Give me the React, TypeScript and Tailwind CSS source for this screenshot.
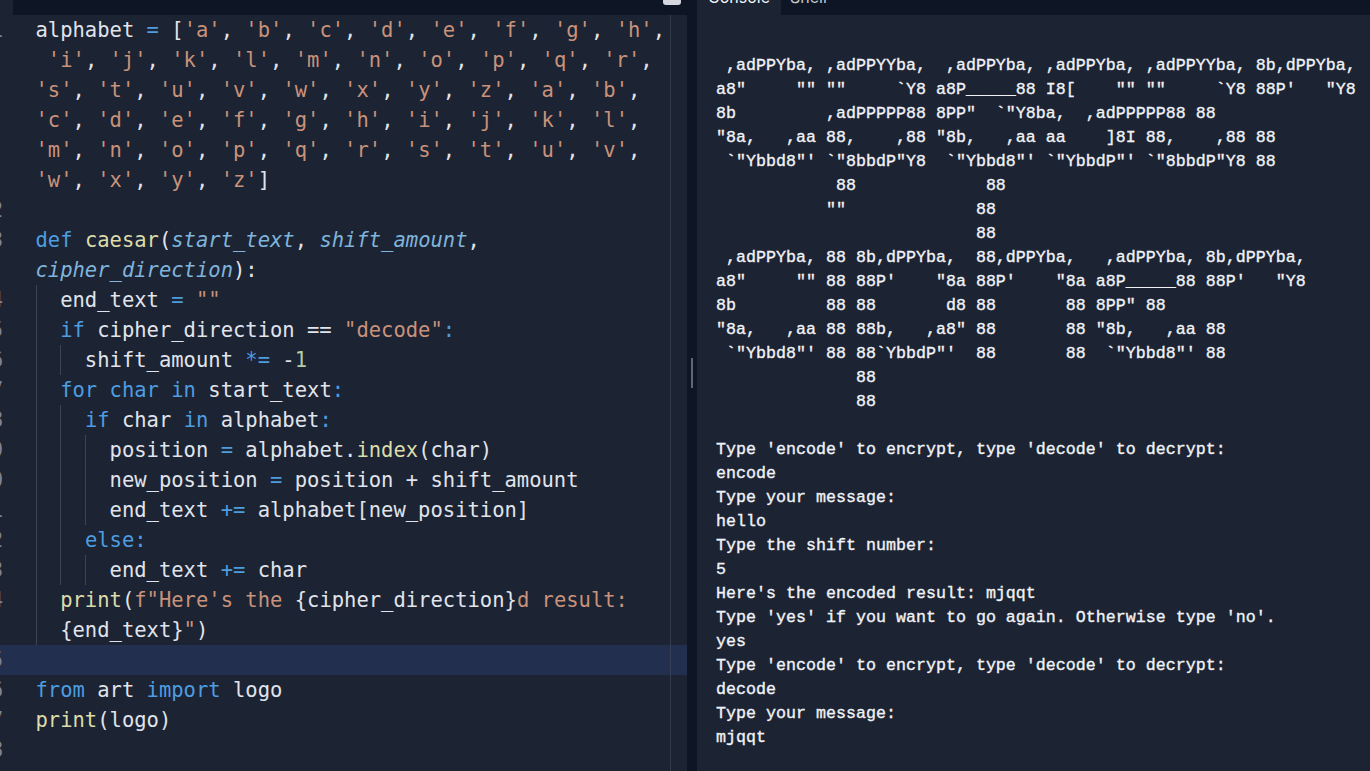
type Part = [string, string]
type Line = { n?: string; parts: Part[]; guides?: number[]; active?: boolean }

const W = 'text-[#e0e4ec]'
const B = 'text-[#4d9de0]'
const S = 'text-[#c9927a]'
const Y = 'text-[#dcdcaa]'
const N = 'text-[#b5cea8]'
const P = 'text-[#7fb4dc] italic'

function color(c: string) {
  if (c === 'b') return B
  if (c === 's') return S
  if (c === 'y') return Y
  if (c === 'n') return N
  if (c === 'p') return P
  return W
}

const lines: Line[] = [
  { n: '1', parts: [['alphabet ', 'w'], ['=', 'b'], [' [', 'w'], ["'a'", 's'], [', ', 'w'], ["'b'", 's'], [', ', 'w'], ["'c'", 's'], [', ', 'w'], ["'d'", 's'], [', ', 'w'], ["'e'", 's'], [', ', 'w'], ["'f'", 's'], [', ', 'w'], ["'g'", 's'], [', ', 'w'], ["'h'", 's'], [',', 'w']] },
  { parts: [[' ', 'w'], ["'i'", 's'], [', ', 'w'], ["'j'", 's'], [', ', 'w'], ["'k'", 's'], [', ', 'w'], ["'l'", 's'], [', ', 'w'], ["'m'", 's'], [', ', 'w'], ["'n'", 's'], [', ', 'w'], ["'o'", 's'], [', ', 'w'], ["'p'", 's'], [', ', 'w'], ["'q'", 's'], [', ', 'w'], ["'r'", 's'], [',', 'w']] },
  { parts: [["'s'", 's'], [', ', 'w'], ["'t'", 's'], [', ', 'w'], ["'u'", 's'], [', ', 'w'], ["'v'", 's'], [', ', 'w'], ["'w'", 's'], [', ', 'w'], ["'x'", 's'], [', ', 'w'], ["'y'", 's'], [', ', 'w'], ["'z'", 's'], [', ', 'w'], ["'a'", 's'], [', ', 'w'], ["'b'", 's'], [',', 'w']] },
  { parts: [["'c'", 's'], [', ', 'w'], ["'d'", 's'], [', ', 'w'], ["'e'", 's'], [', ', 'w'], ["'f'", 's'], [', ', 'w'], ["'g'", 's'], [', ', 'w'], ["'h'", 's'], [', ', 'w'], ["'i'", 's'], [', ', 'w'], ["'j'", 's'], [', ', 'w'], ["'k'", 's'], [', ', 'w'], ["'l'", 's'], [',', 'w']] },
  { parts: [["'m'", 's'], [', ', 'w'], ["'n'", 's'], [', ', 'w'], ["'o'", 's'], [', ', 'w'], ["'p'", 's'], [', ', 'w'], ["'q'", 's'], [', ', 'w'], ["'r'", 's'], [', ', 'w'], ["'s'", 's'], [', ', 'w'], ["'t'", 's'], [', ', 'w'], ["'u'", 's'], [', ', 'w'], ["'v'", 's'], [',', 'w']] },
  { parts: [["'w'", 's'], [', ', 'w'], ["'x'", 's'], [', ', 'w'], ["'y'", 's'], [', ', 'w'], ["'z'", 's'], [']', 'w']] },
  { n: '2', parts: [] },
  { n: '3', parts: [['def', 'b'], [' ', 'w'], ['caesar', 'y'], ['(', 'w'], ['start_text', 'p'], [', ', 'w'], ['shift_amount', 'p'], [',', 'w']] },
  { parts: [['cipher_direction', 'p'], ['):', 'w']] },
  { n: '4', guides: [0], parts: [['  end_text ', 'w'], ['=', 'b'], [' ', 'w'], ['""', 's']] },
  { n: '5', guides: [0], parts: [['  ', 'w'], ['if', 'b'], [' cipher_direction == ', 'w'], ['"decode"', 's'], [':', 'b']] },
  { n: '6', guides: [0, 1], parts: [['    shift_amount ', 'w'], ['*=', 'b'], [' -', 'w'], ['1', 'n']] },
  { n: '7', guides: [0], parts: [['  ', 'w'], ['for', 'b'], [' ', 'w'], ['char', 'b'], [' ', 'w'], ['in', 'b'], [' start_text', 'w'], [':', 'b']] },
  { n: '8', guides: [0, 1], parts: [['    ', 'w'], ['if', 'b'], [' char ', 'w'], ['in', 'b'], [' alphabet', 'w'], [':', 'b']] },
  { n: '9', guides: [0, 1, 2], parts: [['      position ', 'w'], ['=', 'b'], [' alphabet.', 'w'], ['index', 'y'], ['(char)', 'w']] },
  { n: '10', guides: [0, 1, 2], parts: [['      new_position ', 'w'], ['=', 'b'], [' position + shift_amount', 'w']] },
  { n: '11', guides: [0, 1, 2], parts: [['      end_text ', 'w'], ['+=', 'b'], [' alphabet[new_position]', 'w']] },
  { n: '12', guides: [0, 1], parts: [['    ', 'w'], ['else', 'b'], [':', 'b']] },
  { n: '13', guides: [0, 1, 2], parts: [['      end_text ', 'w'], ['+=', 'b'], [' char', 'w']] },
  { n: '14', guides: [0], parts: [['  ', 'w'], ['print', 'y'], ['(', 'w'], ['f"Here\'s the ', 's'], ['{cipher_direction}', 'w'], ['d result:', 's']] },
  { guides: [0], parts: [['  ', 'w'], ['{end_text}', 'w'], ['"', 's'], [')', 'w']] },
  { n: '15', active: true, parts: [] },
  { n: '16', parts: [['from', 'b'], [' art ', 'w'], ['import', 'b'], [' logo', 'w']] },
  { n: '17', parts: [['print', 'y'], ['(logo)', 'w']] },
  { n: '18', parts: [] },
]

const consoleText = `
 ,adPPYba, ,adPPYYba,  ,adPPYba, ,adPPYba, ,adPPYYba, 8b,dPPYba,
a8"     "" ""     \`Y8 a8P_____88 I8[    "" ""     \`Y8 88P'   "Y8
8b         ,adPPPPP88 8PP"  \`"Y8ba,  ,adPPPPP88 88
"8a,   ,aa 88,    ,88 "8b,   ,aa aa    ]8I 88,    ,88 88
 \`"Ybbd8"' \`"8bbdP"Y8  \`"Ybbd8"' \`"YbbdP"' \`"8bbdP"Y8 88
            88             88
           ""             88
                          88
 ,adPPYba, 88 8b,dPPYba,  88,dPPYba,   ,adPPYba, 8b,dPPYba,
a8"     "" 88 88P'    "8a 88P'    "8a a8P_____88 88P'   "Y8
8b         88 88       d8 88       88 8PP" 88
"8a,   ,aa 88 88b,   ,a8" 88       88 "8b,   ,aa 88
 \`"Ybbd8"' 88 88\`YbbdP"'  88       88  \`"Ybbd8"' 88
              88
              88

Type 'encode' to encrypt, type 'decode' to decrypt:
encode
Type your message:
hello
Type the shift number:
5
Here's the encoded result: mjqqt
Type 'yes' if you want to go again. Otherwise type 'no'.
yes
Type 'encode' to encrypt, type 'decode' to decrypt:
decode
Type your message:
mjqqt`

const guideX = ['left-[36px]', 'left-[60px]', 'left-[85px]']

export default function App() {
  return (
    <div className="h-[771px] w-[1370px] overflow-hidden flex flex-col bg-[#0e1525]">
      {/* Tab bar, scrolled mostly out of view */}
      <div className="h-[15px] flex shrink-0 overflow-hidden">
        <div className="w-[13px] bg-[#1c2333]" />
        <div className="w-[674px] relative">
          <div className="absolute left-[650px] top-[-2px] w-[18px] h-[7px] rounded-[3px] bg-[#d5d8de]" />
        </div>
        <div className="w-[10px]" />
        <div className="w-[84px] bg-[#1c2333] flex items-end justify-center pb-[6px] text-[16px] leading-[24px] text-[#f5f9fc] font-['Inter',sans-serif]">Console</div>
        <div className="pl-[9px] flex items-end pb-[6px] text-[16px] leading-[24px] text-[#c2c8cc] font-['Inter',sans-serif]">Shell</div>
      </div>
      <div className="flex-1 flex min-h-0">
        {/* Editor */}
        <div className="w-[687px] bg-[#1c2333] relative overflow-hidden font-['DejaVu_Sans_Mono',monospace] text-[20.5px] leading-[30px]">
          {lines.map((l, i) => (
            <div key={i} className={`h-[30px] flex relative ${l.active ? 'bg-[#232f4f]' : ''}`}>
              <div className="w-[3px] overflow-hidden flex justify-end text-[#7d8492] shrink-0">{l.n}</div>
              <div className="pl-[32.5px] whitespace-pre">
                {l.parts.map((p, j) => (
                  <span key={j} className={color(p[1])}>{p[0]}</span>
                ))}
              </div>
              {l.guides?.map(g => (
                <div key={g} className={`absolute top-0 bottom-0 w-px bg-[#3d4454] ${guideX[g]}`} />
              ))}
            </div>
          ))}
          <div className="absolute left-[670px] top-0 bottom-0 w-px bg-[#3d4454]/70" />
        </div>
        {/* Divider */}
        <div className="w-[10px] flex items-center justify-center pb-[40px]">
          <div className="w-[2px] h-[30px] bg-[#5f6675]" />
        </div>
        {/* Console */}
        <div className="flex-1 bg-[#1c2333] pt-[15px] pl-[19px] overflow-hidden">
          <pre className="font-['Liberation_Mono',monospace] text-[16.67px] leading-[24px] text-[#f0f2f5] whitespace-pre [-webkit-text-stroke:0.35px_#f0f2f5]">{consoleText}</pre>
        </div>
      </div>
    </div>
  )
}
